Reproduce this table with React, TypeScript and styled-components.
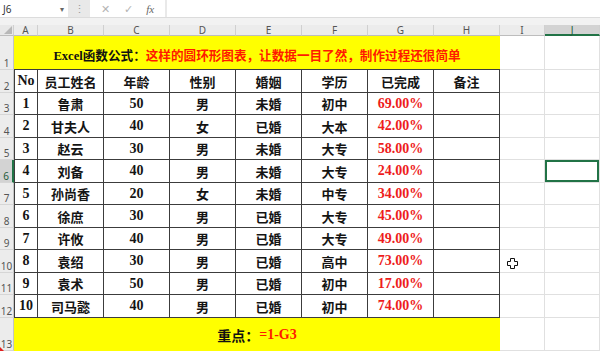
import React from 'react'
import styled, { createGlobalStyle } from 'styled-components'

const GlobalStyle = createGlobalStyle`
  html, body {
    margin: 0;
    padding: 0;
    background: #ffffff;
    overflow: hidden;
  }
`

type Row = {
  no: string
  name: string
  age: string
  sex: string
  married: string
  edu: string
  done: string
}

const rows: Row[] = [
  { no: '1', name: '鲁肃', age: '50', sex: '男', married: '未婚', edu: '初中', done: '69.00%' },
  { no: '2', name: '甘夫人', age: '40', sex: '女', married: '已婚', edu: '大本', done: '42.00%' },
  { no: '3', name: '赵云', age: '30', sex: '男', married: '未婚', edu: '大专', done: '58.00%' },
  { no: '4', name: '刘备', age: '40', sex: '男', married: '未婚', edu: '大专', done: '24.00%' },
  { no: '5', name: '孙尚香', age: '20', sex: '女', married: '未婚', edu: '中专', done: '34.00%' },
  { no: '6', name: '徐庶', age: '30', sex: '男', married: '已婚', edu: '大专', done: '45.00%' },
  { no: '7', name: '许攸', age: '40', sex: '男', married: '已婚', edu: '大专', done: '49.00%' },
  { no: '8', name: '袁绍', age: '30', sex: '男', married: '已婚', edu: '高中', done: '73.00%' },
  { no: '9', name: '袁术', age: '50', sex: '男', married: '已婚', edu: '初中', done: '17.00%' },
  { no: '10', name: '司马懿', age: '40', sex: '男', married: '已婚', edu: '初中', done: '74.00%' },
]

const headers = ['No', '员工姓名', '年龄', '性别', '婚姻', '学历', '已完成', '备注']
const letters = ['A', 'B', 'C', 'D', 'E', 'F', 'G', 'H', 'I', 'J']

const SERIF = `"Liberation Serif", "Noto Sans CJK SC", serif`
const CJK = `"Liberation Serif", "Noto Sans CJK SC", sans-serif`
const UI = `"Noto Sans", "Liberation Sans", sans-serif`

export default function App() {
  return (
    <>
      <GlobalStyle />
      <Window>
        <FormulaBar>
          <NameBox>
            <span>J6</span>
            <Caret>▾</Caret>
          </NameBox>
          <Grip>⋮</Grip>
          <ActionBox>
            <Action>✕</Action>
            <Action>✓</Action>
            <Fx>fx</Fx>
          </ActionBox>
          <FormulaInput />
        </FormulaBar>
        <Spacer />
        <Sheet>
          <Corner>
            <svg width="8" height="8" viewBox="0 0 8 8">
              <path d="M8 0 L8 8 L0 8 Z" fill="#b8b8b8" />
            </svg>
          </Corner>
          {letters.map((l) => (
            <ColHeader key={l} $active={l === 'J'}>
              {l}
            </ColHeader>
          ))}

          <RowHeader>1</RowHeader>
          <Banner>
            <Ink>Excel函数公式：</Ink>
            <Red>这样的圆环形图表，让数据一目了然，制作过程还很简单</Red>
          </Banner>
          <Plain />
          <Plain />

          <RowHeader>2</RowHeader>
          {headers.map((h, i) => (
            <TableCell key={h} $first={i === 0} $latin={i === 0}>
              {h}
            </TableCell>
          ))}
          <Plain />
          <Plain />

          {rows.map((r, idx) => {
            const rowNo = idx + 3
            return (
              <React.Fragment key={r.no}>
                <RowHeader $active={rowNo === 6}>{rowNo}</RowHeader>
                <TableCell $first $latin>
                  {r.no}
                </TableCell>
                <TableCell>{r.name}</TableCell>
                <TableCell $latin>{r.age}</TableCell>
                <TableCell>{r.sex}</TableCell>
                <TableCell>{r.married}</TableCell>
                <TableCell>{r.edu}</TableCell>
                <TableCell $latin $red>
                  {r.done}
                </TableCell>
                <TableCell />
                <Plain />
                <Plain $selected={rowNo === 6} />
              </React.Fragment>
            )
          })}

          <RowHeader>13</RowHeader>
          <Banner $bottom>
            <Ink>重点：</Ink>
            <Red>=1-G3</Red>
          </Banner>
          <Plain />
          <Plain />
        </Sheet>

        <CursorMark width="11" height="11" viewBox="0 0 11 11">
          <path
            d="M3.5 0.5 H7.5 V3.5 H10.5 V7.5 H7.5 V10.5 H3.5 V7.5 H0.5 V3.5 H3.5 Z"
            fill="#ffffff"
            stroke="#111111"
            strokeWidth="1"
          />
        </CursorMark>
        <RedTick />
      </Window>
    </>
  )
}

const Window = styled.div`
  position: relative;
  width: 600px;
  height: 351px;
  overflow: hidden;
  background: #ffffff;
  display: flex;
  flex-direction: column;
`

const FormulaBar = styled.div`
  height: 17px;
  display: flex;
  align-items: stretch;
  background: #e9e9e9;
  gap: 2px;
  font-family: ${UI};
`

const NameBox = styled.div`
  width: 68px;
  background: #ffffff;
  display: flex;
  align-items: center;
  justify-content: space-between;
  padding: 0 4px 0 3px;
  box-sizing: border-box;
  font-size: 10px;
  color: #333333;
`

const Caret = styled.span`
  font-size: 8px;
  color: #666666;
`

const Grip = styled.div`
  width: 18px;
  display: flex;
  align-items: center;
  justify-content: center;
  font-size: 11px;
  color: #9a9a9a;
`

const ActionBox = styled.div`
  width: 75px;
  background: #ffffff;
  display: flex;
  align-items: center;
  justify-content: space-around;
  padding: 0 4px;
  box-sizing: border-box;
`

const Action = styled.span`
  font-size: 11px;
  color: #b4b4b4;
`

const Fx = styled.span`
  font-family: ${SERIF};
  font-style: italic;
  font-size: 11px;
  color: #666666;
`

const FormulaInput = styled.div`
  flex: 1;
  background: #ffffff;
`

const Spacer = styled.div`
  height: 8px;
  background: #f2f2f2;
  border-top: 1px solid #dcdcdc;
  box-sizing: border-box;
`

const Sheet = styled.div`
  flex: 1;
  display: grid;
  grid-template-columns: 14px 24px repeat(7, 66px) 45px 1fr;
  grid-template-rows: 11px 34px repeat(11, 22.5px) 1fr;
`

const Corner = styled.div`
  background: #e8e8e8;
  border-right: 1px solid #cfcfcf;
  border-bottom: 1px solid #bdbdbd;
  box-sizing: border-box;
  display: flex;
  align-items: flex-end;
  justify-content: flex-end;
  padding: 0 1px 1px 0;
`

const ColHeader = styled.div<{ $active?: boolean }>`
  background: ${(p) => (p.$active ? '#d3d3d3' : '#ececec')};
  border-right: 1px solid #d0d0d0;
  border-bottom: ${(p) => (p.$active ? '2px solid #217346' : '1px solid #bdbdbd')};
  box-sizing: border-box;
  display: flex;
  align-items: center;
  justify-content: center;
  font-family: ${UI};
  font-size: 10px;
  line-height: 1;
  color: ${(p) => (p.$active ? '#1e5c3a' : '#555555')};
`

const RowHeader = styled.div<{ $active?: boolean }>`
  background: ${(p) => (p.$active ? '#d3d3d3' : '#ececec')};
  border-right: ${(p) => (p.$active ? '2px solid #217346' : '1px solid #c4c4c4')};
  border-bottom: 1px solid #d6d6d6;
  box-sizing: border-box;
  display: flex;
  align-items: flex-end;
  justify-content: center;
  padding-bottom: 1px;
  font-family: ${UI};
  font-size: 10px;
  line-height: 1;
  color: ${(p) => (p.$active ? '#1e5c3a' : '#555555')};
`

const Banner = styled.div<{ $bottom?: boolean }>`
  grid-column: span 8;
  background: #ffff00;
  border-bottom: ${(p) => (p.$bottom ? 'none' : '1px solid #3c3c3c')};
  box-sizing: border-box;
  display: flex;
  align-items: center;
  justify-content: center;
  font-family: ${CJK};
  font-weight: 700;
  font-size: ${(p) => (p.$bottom ? '14px' : '12.6px')};
  white-space: nowrap;
  padding-top: ${(p) => (p.$bottom ? '1px' : '3px')};
`

const Ink = styled.span`
  color: #111111;
`

const Red = styled.span`
  color: #ff1a00;
`

const TableCell = styled.div<{
  $first?: boolean
  $latin?: boolean
  $red?: boolean
}>`
  border-right: 1px solid #3c3c3c;
  border-bottom: 1px solid #3c3c3c;
  border-left: ${(p) => (p.$first ? '1px solid #3c3c3c' : 'none')};
  box-sizing: border-box;
  display: flex;
  align-items: center;
  justify-content: center;
  font-family: ${(p) => (p.$latin ? SERIF : CJK)};
  font-weight: 700;
  font-size: ${(p) => (p.$latin ? '14px' : '13px')};
  color: ${(p) => (p.$red ? '#ee1c1c' : '#141414')};
  white-space: nowrap;
  padding-top: 1px;
`

const Plain = styled.div<{ $selected?: boolean }>`
  border-right: 1px solid #e0e0e0;
  border-bottom: 1px solid #e0e0e0;
  box-sizing: border-box;
  box-shadow: ${(p) => (p.$selected ? 'inset 0 0 0 2px #217346' : 'none')};
`

const CursorMark = styled.svg`
  position: absolute;
  left: 507px;
  top: 258px;
`

const RedTick = styled.div`
  position: absolute;
  left: 0;
  bottom: 0;
  width: 0;
  height: 0;
  border-left: 4px solid #e02020;
  border-top: 4px solid transparent;
`
